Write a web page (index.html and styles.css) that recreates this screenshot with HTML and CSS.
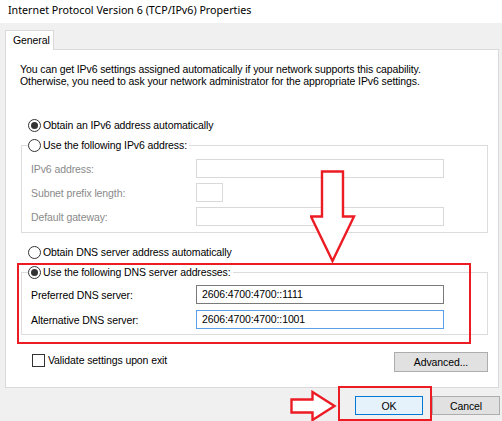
FILE: index.html
```html
<!DOCTYPE html>
<html>
<head>
<meta charset="utf-8">
<link rel="stylesheet" href="styles.css">
</head>
<body>
<div class="window">
  <div class="titlebar">Internet Protocol Version 6 (TCP/IPv6) Properties</div>
  <div class="client">
    <div class="tabs"><div class="tab">General</div></div>
    <div class="panel">
      <p class="intro">You can get IPv6 settings assigned automatically if your network supports this capability.<br>Otherwise, you need to ask your network administrator for the appropriate IPv6 settings.</p>
      <div class="option opt1"><span class="radio checked"></span><span>Obtain an IPv6 address automatically</span></div>
      <fieldset class="group g1">
        <legend><span class="radio"></span><span>Use the following IPv6 address:</span></legend>
        <div class="field"><span class="lbl disabled">IPv6 address:</span><span class="input dis wide"></span></div>
        <div class="field"><span class="lbl disabled">Subnet prefix length:</span><span class="input dis small"></span></div>
        <div class="field"><span class="lbl disabled">Default gateway:</span><span class="input dis wide"></span></div>
      </fieldset>
      <div class="option opt3"><span class="radio"></span><span>Obtain DNS server address automatically</span></div>
      <fieldset class="group g2">
        <legend><span class="radio checked"></span><span>Use the following DNS server addresses:</span></legend>
        <div class="field"><span class="lbl">Preferred DNS server:</span><span class="input wide">2606:4700:4700::1111</span></div>
        <div class="field"><span class="lbl">Alternative DNS server:</span><span class="input wide focus">2606:4700:4700::1001</span></div>
      </fieldset>
      <div class="bottom-row">
        <div class="check"><span class="box"></span><span>Validate settings upon exit</span></div>
        <div class="btn advanced">Advanced...</div>
      </div>
    </div>
    <div class="buttons">
      <div class="btn ok">OK</div>
      <div class="btn cancel">Cancel</div>
    </div>
  </div>

  <div class="mark dns-box"></div>
  <div class="mark ok-box"></div>
  <svg class="arrow-down" width="46" height="96" viewBox="0 0 46 96">
    <polygon points="10.5,1.5 31.5,1.5 31.5,46.5 42.5,46.5 21,91 -0.5,46.5 10.5,46.5" transform="translate(1.5,0)" fill="#fff" stroke="#ec1c24" stroke-width="2.4" stroke-linejoin="miter"/>
  </svg>
  <svg class="arrow-right" width="48" height="32" viewBox="0 0 48 32">
    <polygon points="1.5,9.5 22.5,9.5 22.5,2 44.5,16 22.5,30 22.5,22.5 1.5,22.5" fill="#fff" stroke="#ec1c24" stroke-width="2.4"/>
  </svg>
</div>
</body>
</html>
```

FILE: styles.css
```css
* { box-sizing: border-box; }
html, body { margin: 0; padding: 0; }
body {
  width: 502px;
  height: 421px;
  overflow: hidden;
  background: #f0f0f0;
  font-family: "Liberation Sans", Arial, sans-serif;
  font-size: 10.5px;
  letter-spacing: -0.1px;
  color: #000;
}
.window {
  position: relative;
  width: 502px;
  height: 421px;
  background: #f0f0f0;
}
.titlebar {
  height: 23px;
  background: #fff;
  padding-left: 8px;
  line-height: 21px;
  font-family: "Noto Sans", "Open Sans", sans-serif;
  font-size: 10.7px;
  letter-spacing: 0;
  color: #000;
}
.client {
  padding: 7px 0 0 5px;
}
.tabs {
  display: flex;
  height: 19px;
}
.tab {
  position: relative;
  z-index: 1;
  width: 49px;
  height: 20px;
  background: #fff;
  border: 1px solid #d9d9d9;
  border-bottom: none;
  padding-left: 7px;
  line-height: 18px;
}
.panel {
  width: 494px;
  height: 339px;
  background: #fff;
  border: 1px solid #d9d9d9;
  padding: 0;
}
.intro {
  margin: 13px 0 0 14px;
  line-height: 12px;
}
.option, legend, .check {
  display: flex;
  align-items: center;
  height: 14px;
  gap: 2px;
}
.opt1 { margin: 31px 0 0 22px; }
.opt3 { margin: 12px 0 0 22px; }
.radio {
  width: 13px;
  height: 13px;
  border: 1px solid #333;
  border-radius: 50%;
  background: #fff;
  display: flex;
  align-items: center;
  justify-content: center;
}
.radio.checked::after {
  content: "";
  width: 7px;
  height: 7px;
  border-radius: 50%;
  background: #333;
}
.group {
  margin: 6px 0 0 15px;
  width: 467px;
  border: 1px solid #dcdcdc;
  padding: 0 0 6px 9px;
  min-width: 0;
}
.group legend {
  margin-left: -3px;
  padding: 0 2px 0 0;
}
.field {
  display: flex;
  align-items: center;
  height: 19px;
  margin-top: 5px;
}
.g1 .field:first-of-type { margin-top: 7px; }
.g2 .field { margin-top: 6px; }
.g2 { padding-bottom: 5px; }
.lbl { width: 165px; }
.lbl.disabled { color: #8a8a8a; }
.input {
  height: 19px;
  border: 1px solid #7a7a7a;
  background: #fff;
  padding-left: 5px;
  line-height: 17px;
}
.input.dis { border-color: #d9d9d9; }
.input.wide { width: 248px; }
.input.small { width: 27px; }
.input.focus { border-color: #5aa0e6; }
.bottom-row {
  display: flex;
  justify-content: space-between;
  align-items: flex-start;
  margin: 17px 0 0 26px;
  width: 456px;
}
.check { margin-top: 1px; gap: 3px; }
.box {
  width: 13px;
  height: 13px;
  border: 1px solid #333;
  background: #fff;
}
.btn {
  display: flex;
  align-items: center;
  justify-content: center;
  background: #e1e1e1;
  border: 1px solid #adadad;
}
.advanced { width: 94px; height: 20px; }
.buttons {
  display: flex;
  justify-content: flex-end;
  gap: 9px;
  margin-top: 8px;
  padding-right: 2px;
}
.ok, .cancel { width: 68px; height: 19px; }
.ok { background: #e5f1fb; border-color: #0078d7; }
.mark {
  position: absolute;
  border: 2.5px solid #ec1c24;
}
.dns-box { left: 17px; top: 263px; width: 454px; height: 81px; }
.ok-box { left: 338px; top: 386px; width: 94px; height: 35px; }
.arrow-down { position: absolute; left: 310px; top: 170px; }
.arrow-right { position: absolute; left: 290px; top: 390px; }
```
